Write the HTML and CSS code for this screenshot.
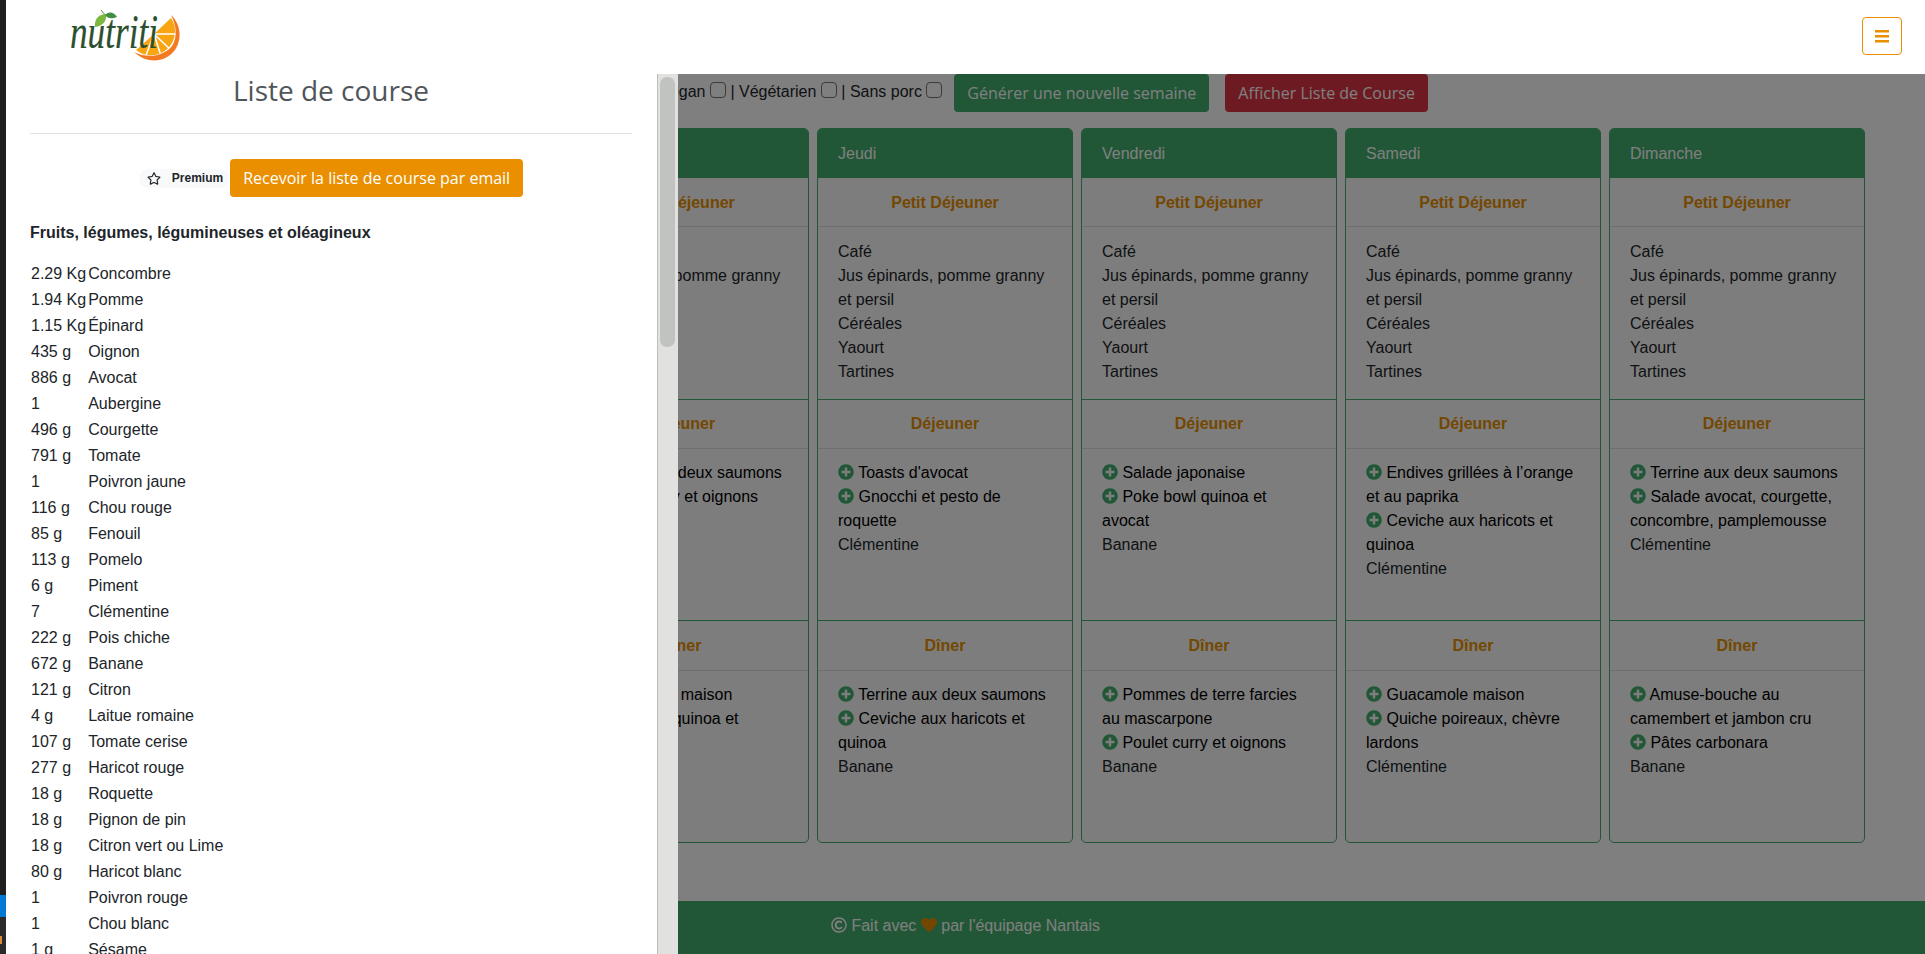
FILE: index.html
```html
<!DOCTYPE html>
<html lang="fr">
<head>
    <meta charset="UTF-8">
    <meta name="viewport" content="width=device-width, initial-scale=1.0">
    <title>Nutriti</title>
    <link rel="stylesheet" href="styles.css">
</head>
<body>
    <svg class="sprites" width="0" height="0">
        <symbol id="i-plus" viewBox="0 0 512 512"><path d="M256 8C119 8 8 119 8 256s111 248 248 248 248-111 248-248S393 8 256 8zm144 276c0 6.6-5.4 12-12 12h-92v92c0 6.6-5.4 12-12 12h-56c-6.6 0-12-5.4-12-12v-92h-92c-6.6 0-12-5.4-12-12v-56c0-6.6 5.4-12 12-12h92v-92c0-6.6 5.4-12 12-12h56c6.6 0 12 5.4 12 12v92h92c6.6 0 12 5.4 12 12v56z"/></symbol>
    </svg>

    <!-- Desktop edge behind the browser -->
    <div class="edge">
        <div class="edge-dark"></div>
        <div class="edge-blue"></div>
        <div class="edge-low"><span class="edge-mark"></span></div>
    </div>

    <div class="page">
        <nav class="navbar">
            <svg class="logo" width="130" height="65" viewBox="0 0 130 65">
                <path d="M94 29 L111 13 A24 24 0 0 1 76 45 Z" fill="#f9a411"/>
                <path d="M94 29 H120 M94 29 L113 47 M94 29 L102 54 M94 29 L85 53" stroke="#fff" stroke-width="1.6"/>
                <path d="M111 10 C120 18 123 33 115 45 C106 57 88 60 74 47 C88 54 104 51 112 41 C118 32 116 20 111 10 Z" fill="#f37a21"/>
                <path d="M41 5 L46 11" stroke="#5c8f3c" stroke-width="1"/>
                <path d="M35 22 C34 14 39 9 46 9 C47 16 43 21 35 22 Z" fill="#7cb83f"/>
                <path d="M45 10 C49 6 54 7 57 12 C52 14 48 14 45 10 Z" fill="#3f8f43"/>
                <text class="logo-text" x="10" y="43" textLength="88" lengthAdjust="spacingAndGlyphs">nutriti</text>
            </svg>
            <button class="menu-btn" type="button">
                <svg width="14" height="13" viewBox="0 0 14 13"><path d="M0 0h14v2.4H0zM0 5h14v2.4H0zM0 10h14v2.4H0z" fill="#e98f00"/></svg>
            </button>
        </nav>

        <div class="filters">
            <span class="filter-label">Filtrer : Végan <input type="checkbox"> | Végétarien <input type="checkbox"> | Sans porc <input type="checkbox"></span>
            <button class="btn btn-green" type="button">Générer une nouvelle semaine</button>
            <button class="btn btn-red" type="button">Afficher Liste de Course</button>
        </div>

        <div class="week">
            <div class="card">
                <div class="card-head">Lundi</div>
                <div class="meal">
                    <div class="meal-title">Petit Déjeuner</div>
                    <div class="meal-body">Café<br>Jus épinards, pomme granny et persil<br>Céréales<br>Yaourt<br>Tartines</div>
                </div>
                <div class="meal">
                    <div class="meal-title">Déjeuner</div>
                    <div class="meal-body">
                        <div class="dish"><svg class="plus"><use href="#i-plus"/></svg> Salade japonaise</div>
                        <div class="dish"><svg class="plus"><use href="#i-plus"/></svg> Toasts d'avocat</div>
                        Banane
                    </div>
                </div>
                <div class="meal">
                    <div class="meal-title">Dîner</div>
                    <div class="meal-body">
                        <div class="dish"><svg class="plus"><use href="#i-plus"/></svg> Guacamole maison</div>
                        <div class="dish"><svg class="plus"><use href="#i-plus"/></svg> Pâtes carbonara</div>
                        Clémentine
                    </div>
                </div>
            </div>
            <div class="card">
                <div class="card-head">Mardi</div>
                <div class="meal">
                    <div class="meal-title">Petit Déjeuner</div>
                    <div class="meal-body">Café<br>Jus épinards, pomme granny et persil<br>Céréales<br>Yaourt<br>Tartines</div>
                </div>
                <div class="meal">
                    <div class="meal-title">Déjeuner</div>
                    <div class="meal-body">
                        <div class="dish"><svg class="plus"><use href="#i-plus"/></svg> Poke bowl quinoa et avocat</div>
                        <div class="dish"><svg class="plus"><use href="#i-plus"/></svg> Poulet curry et oignons</div>
                        Clémentine
                    </div>
                </div>
                <div class="meal">
                    <div class="meal-title">Dîner</div>
                    <div class="meal-body">
                        <div class="dish"><svg class="plus"><use href="#i-plus"/></svg> Terrine aux deux saumons</div>
                        <div class="dish"><svg class="plus"><use href="#i-plus"/></svg> Gnocchi et pesto de roquette</div>
                        Banane
                    </div>
                </div>
            </div>
            <div class="card">
                <div class="card-head">Mercredi</div>
                <div class="meal">
                    <div class="meal-title">Petit Déjeuner</div>
                    <div class="meal-body">Café<br>Jus épinards, pomme granny et persil<br>Céréales<br>Yaourt<br>Tartines</div>
                </div>
                <div class="meal">
                    <div class="meal-title">Déjeuner</div>
                    <div class="meal-body">
                        <div class="dish"><svg class="plus"><use href="#i-plus"/></svg> Terrine aux deux saumons</div>
                        <div class="dish"><svg class="plus"><use href="#i-plus"/></svg> Poulet curry et oignons</div>
                        Banane
                    </div>
                </div>
                <div class="meal">
                    <div class="meal-title">Dîner</div>
                    <div class="meal-body">
                        <div class="dish"><svg class="plus"><use href="#i-plus"/></svg> Guacamole maison</div>
                        <div class="dish"><svg class="plus"><use href="#i-plus"/></svg> Poke bowl quinoa et avocat</div>
                        Banane
                    </div>
                </div>
            </div>
            <div class="card">
                <div class="card-head">Jeudi</div>
                <div class="meal">
                    <div class="meal-title">Petit Déjeuner</div>
                    <div class="meal-body">Café<br>Jus épinards, pomme granny et persil<br>Céréales<br>Yaourt<br>Tartines</div>
                </div>
                <div class="meal">
                    <div class="meal-title">Déjeuner</div>
                    <div class="meal-body">
                        <div class="dish"><svg class="plus"><use href="#i-plus"/></svg> Toasts d'avocat</div>
                        <div class="dish"><svg class="plus"><use href="#i-plus"/></svg> Gnocchi et pesto de roquette</div>
                        Clémentine
                    </div>
                </div>
                <div class="meal">
                    <div class="meal-title">Dîner</div>
                    <div class="meal-body">
                        <div class="dish"><svg class="plus"><use href="#i-plus"/></svg> Terrine aux deux saumons</div>
                        <div class="dish"><svg class="plus"><use href="#i-plus"/></svg> Ceviche aux haricots et quinoa</div>
                        Banane
                    </div>
                </div>
            </div>
            <div class="card">
                <div class="card-head">Vendredi</div>
                <div class="meal">
                    <div class="meal-title">Petit Déjeuner</div>
                    <div class="meal-body">Café<br>Jus épinards, pomme granny et persil<br>Céréales<br>Yaourt<br>Tartines</div>
                </div>
                <div class="meal">
                    <div class="meal-title">Déjeuner</div>
                    <div class="meal-body">
                        <div class="dish"><svg class="plus"><use href="#i-plus"/></svg> Salade japonaise</div>
                        <div class="dish"><svg class="plus"><use href="#i-plus"/></svg> Poke bowl quinoa et avocat</div>
                        Banane
                    </div>
                </div>
                <div class="meal">
                    <div class="meal-title">Dîner</div>
                    <div class="meal-body">
                        <div class="dish"><svg class="plus"><use href="#i-plus"/></svg> Pommes de terre farcies au mascarpone</div>
                        <div class="dish"><svg class="plus"><use href="#i-plus"/></svg> Poulet curry et oignons</div>
                        Banane
                    </div>
                </div>
            </div>
            <div class="card">
                <div class="card-head">Samedi</div>
                <div class="meal">
                    <div class="meal-title">Petit Déjeuner</div>
                    <div class="meal-body">Café<br>Jus épinards, pomme granny et persil<br>Céréales<br>Yaourt<br>Tartines</div>
                </div>
                <div class="meal">
                    <div class="meal-title">Déjeuner</div>
                    <div class="meal-body">
                        <div class="dish"><svg class="plus"><use href="#i-plus"/></svg> Endives grillées à l’orange et au paprika</div>
                        <div class="dish"><svg class="plus"><use href="#i-plus"/></svg> Ceviche aux haricots et quinoa</div>
                        Clémentine
                    </div>
                </div>
                <div class="meal">
                    <div class="meal-title">Dîner</div>
                    <div class="meal-body">
                        <div class="dish"><svg class="plus"><use href="#i-plus"/></svg> Guacamole maison</div>
                        <div class="dish"><svg class="plus"><use href="#i-plus"/></svg> Quiche poireaux, chèvre lardons</div>
                        Clémentine
                    </div>
                </div>
            </div>
            <div class="card">
                <div class="card-head">Dimanche</div>
                <div class="meal">
                    <div class="meal-title">Petit Déjeuner</div>
                    <div class="meal-body">Café<br>Jus épinards, pomme granny et persil<br>Céréales<br>Yaourt<br>Tartines</div>
                </div>
                <div class="meal">
                    <div class="meal-title">Déjeuner</div>
                    <div class="meal-body">
                        <div class="dish"><svg class="plus"><use href="#i-plus"/></svg> Terrine aux deux saumons</div>
                        <div class="dish"><svg class="plus"><use href="#i-plus"/></svg> Salade avocat, courgette, concombre, pamplemousse</div>
                        Clémentine
                    </div>
                </div>
                <div class="meal">
                    <div class="meal-title">Dîner</div>
                    <div class="meal-body">
                        <div class="dish"><svg class="plus"><use href="#i-plus"/></svg> Amuse-bouche au camembert et jambon cru</div>
                        <div class="dish"><svg class="plus"><use href="#i-plus"/></svg> Pâtes carbonara</div>
                        Banane
                    </div>
                </div>
            </div>
        </div>

        <footer class="footer">
            <svg class="copy" viewBox="0 0 512 512"><path d="M256 8C119.033 8 8 119.033 8 256s111.033 248 248 248 248-111.033 248-248S392.967 8 256 8zm0 448c-110.532 0-200-89.451-200-200 0-110.531 89.451-200 200-200 110.532 0 200 89.451 200 200 0 110.532-89.451 200-200 200zm107.351-101.064c-9.614 9.712-45.53 41.396-104.065 41.396-82.43 0-140.484-61.425-140.484-141.567 0-79.152 60.275-139.401 139.762-139.401 55.531 0 88.738 26.62 97.593 34.779a11.965 11.965 0 0 1 1.936 15.322l-18.155 28.113c-3.841 5.95-11.966 7.282-17.499 2.921-8.595-6.776-31.814-22.538-61.708-22.538-48.303 0-77.916 35.33-77.916 80.082 0 41.589 26.888 83.692 78.277 83.692 32.657 0 56.843-19.039 65.726-27.14 5.769-5.261 14.85-4.35 19.534 1.82l19.518 25.623c3.434 4.512 2.929 10.848-1.044 14.9z"/></svg>
            Fait avec
            <svg class="heart" viewBox="0 0 512 512"><path d="M462.3 62.6C407.5 15.9 326 24.3 275.7 76.2L256 96.5l-19.7-20.3C186.1 24.3 104.5 15.9 49.7 62.6c-62.8 53.6-66.1 149.8-9.9 207.9l193.5 199.8c12.5 12.9 32.8 12.9 45.3 0l193.5-199.8c56.3-58.1 53-154.3-9.8-207.9z"/></svg>
            par l'équipage Nantais
        </footer>

        <!-- Shopping list opened over the dimmed page -->
        <div class="overlay"></div>
        <aside class="panel">
            <div class="panel-inner">
                <h2 class="panel-title">Liste de course</h2>
                <hr class="panel-rule">
                <div class="panel-actions">
                    <span class="badge">
                        <svg class="star" viewBox="0 0 576 512"><path d="M528.1 171.5L382 150.2 316.7 17.8c-11.7-23.6-45.6-23.9-57.4 0L194 150.2 47.9 171.5c-26.2 3.8-36.7 36.1-17.7 54.6l105.7 103-25 145.5c-4.5 26.3 23.2 46 46.4 33.7L288 439.6l130.7 68.7c23.2 12.2 50.9-7.4 46.4-33.7l-25-145.5 105.7-103c19-18.5 8.5-50.8-17.7-54.6zM388.6 312.3l23.7 138.4L288 385.4l-124.3 65.3 23.7-138.4-100.6-98 139-20.2 62.2-126 62.2 126 139 20.2-100.6 98z"/></svg>
                        Premium
                    </span>
                    <button class="btn btn-orange" type="button">Recevoir la liste de course par email</button>
                </div>
                <h3 class="list-title">Fruits, légumes, légumineuses et oléagineux</h3>
                <table class="list">
                    <tr><td>2.29 Kg</td><td>Concombre</td></tr>
                    <tr><td>1.94 Kg</td><td>Pomme</td></tr>
                    <tr><td>1.15 Kg</td><td>Épinard</td></tr>
                    <tr><td>435 g</td><td>Oignon</td></tr>
                    <tr><td>886 g</td><td>Avocat</td></tr>
                    <tr><td>1</td><td>Aubergine</td></tr>
                    <tr><td>496 g</td><td>Courgette</td></tr>
                    <tr><td>791 g</td><td>Tomate</td></tr>
                    <tr><td>1</td><td>Poivron jaune</td></tr>
                    <tr><td>116 g</td><td>Chou rouge</td></tr>
                    <tr><td>85 g</td><td>Fenouil</td></tr>
                    <tr><td>113 g</td><td>Pomelo</td></tr>
                    <tr><td>6 g</td><td>Piment</td></tr>
                    <tr><td>7</td><td>Clémentine</td></tr>
                    <tr><td>222 g</td><td>Pois chiche</td></tr>
                    <tr><td>672 g</td><td>Banane</td></tr>
                    <tr><td>121 g</td><td>Citron</td></tr>
                    <tr><td>4 g</td><td>Laitue romaine</td></tr>
                    <tr><td>107 g</td><td>Tomate cerise</td></tr>
                    <tr><td>277 g</td><td>Haricot rouge</td></tr>
                    <tr><td>18 g</td><td>Roquette</td></tr>
                    <tr><td>18 g</td><td>Pignon de pin</td></tr>
                    <tr><td>18 g</td><td>Citron vert ou Lime</td></tr>
                    <tr><td>80 g</td><td>Haricot blanc</td></tr>
                    <tr><td>1</td><td>Poivron rouge</td></tr>
                    <tr><td>1</td><td>Chou blanc</td></tr>
                    <tr><td>1 g</td><td>Sésame</td></tr>
                </table>
            </div>
            <div class="rail"><div class="rail-thumb"></div></div>
        </aside>
    </div>
</body>
</html>
```

FILE: styles.css
```css
/* General */
html, body {
    height: 100%;
}
body {
    margin: 0;
    display: flex;
    overflow: hidden;
    font-family: "Liberation Sans", Arial, sans-serif;
    font-size: 16px;
    line-height: 24px;
    color: #212529;
    background: #fff;
}
.sprites {
    position: absolute;
}

/* Desktop edge */
.edge {
    width: 6px;
    flex: none;
    display: flex;
    flex-direction: column;
}
.edge-dark {
    height: 895px;
    background: #1f1f1f;
}
.edge-blue {
    height: 22px;
    background: #0078d4;
}
.edge-low {
    flex: 1;
    background: #2b2b2b;
    padding-top: 19px;
}
.edge-mark {
    display: block;
    width: 2px;
    height: 8px;
    background: #d98a3a;
}

/* Page */
.page {
    flex: 1;
    min-width: 0;
    position: relative;
    display: flex;
    flex-direction: column;
}
.navbar {
    height: 74px;
    flex: none;
    display: flex;
    justify-content: space-between;
    padding: 0 23px 0 54px;
    box-sizing: border-box;
    position: relative;
    z-index: 3;
    background: #fff;
}
.logo {
    margin-top: 5px;
}
.logo-text {
    font-family: "Liberation Serif", serif;
    font-style: italic;
    font-size: 48px;
    fill: #2c4f30;
    stroke: #2c4f30;
    stroke-width: 0.2px;
}
.menu-btn {
    width: 40px;
    height: 38px;
    margin-top: 17px;
    padding: 0;
    background: #fff;
    border: 1px solid #e98f00;
    border-radius: 4px;
    display: flex;
    align-items: center;
    justify-content: center;
}

/* Filters */
.filters {
    height: 54px;
    flex: none;
    display: flex;
    align-items: flex-start;
    gap: 16px;
    padding-left: 599px;
}
.filter-label {
    padding-top: 6px;
    margin-right: -4px;
}
.filter-label input {
    appearance: none;
    width: 16px;
    height: 16px;
    margin: 0;
    vertical-align: -1px;
    background: #fff;
    border: 1px solid #767676;
    border-radius: 4px;
}
.btn {
    height: 38px;
    padding: 0 12px;
    border: 1px solid transparent;
    border-radius: 4px;
    font-family: "Open Sans", sans-serif;
    font-size: 16px;
    color: #fff;
}
.btn-green {
    background: #42ae6c;
}
.btn-red {
    background: #dc3545;
}
.btn-orange {
    background: #e98f00;
}

/* Week */
.week {
    display: grid;
    grid-template-columns: repeat(7, 256px);
    gap: 8px;
    padding-left: 19px;
}
.card {
    height: 715px;
    box-sizing: border-box;
    display: flex;
    flex-direction: column;
    background: #fbfbfb;
    border: 1px solid #42ae6c;
    border-radius: 5px;
    overflow: hidden;
}
.card-head {
    height: 49px;
    flex: none;
    box-sizing: border-box;
    padding: 13px 20px 0;
    background: #42ae6c;
    color: #fff;
}
.meal {
    height: 221px;
    flex: none;
    box-sizing: border-box;
    border-bottom: 1px solid #42ae6c;
}
.meal:last-child {
    flex: 1;
    border-bottom: 0;
}
.meal-title {
    padding: 12px 20px;
    text-align: center;
    font-weight: bold;
    color: #e98f00;
    border-bottom: 1px solid #dedede;
}
.meal-body {
    padding: 12px 20px;
}
/* the first and last block sit one pixel lower than the middle one */
.card-head + .meal {
    height: 222px;
}
.card-head + .meal .meal-title {
    padding: 13px 20px 11px;
}
.card-head + .meal .meal-body {
    padding-top: 13px;
}
.meal:last-child .meal-title {
    padding-top: 13px;
}
.dish {
    color: #000;
}
.plus {
    width: 16px;
    height: 16px;
    vertical-align: -2px;
    fill: #42ae6c;
}

/* Footer */
.footer {
    height: 53px;
    flex: none;
    box-sizing: border-box;
    margin-top: auto;
    padding-top: 13px;
    text-align: center;
    background: #42ae6c;
    color: #fff;
}
.copy {
    width: 16px;
    height: 16px;
    vertical-align: -2px;
    fill: #fff;
}
.heart {
    width: 16px;
    height: 16px;
    vertical-align: -2px;
    fill: #e98f00;
}

/* Overlay and shopping list */
.overlay {
    position: absolute;
    top: 74px;
    right: 0;
    bottom: 0;
    left: 0;
    z-index: 1;
    background: rgba(0, 0, 0, 0.5);
}
.panel {
    position: absolute;
    top: 74px;
    bottom: 0;
    left: 0;
    width: 672px;
    z-index: 2;
    display: flex;
    overflow: hidden;
    background: #fff;
}
.panel-inner {
    width: 651px;
    flex: none;
    padding: 0 25px 0 24px;
    box-sizing: border-box;
}
.rail {
    width: 21px;
    flex: none;
    box-sizing: border-box;
    border-left: 1px solid #bdbdbd;
    background: #e1e1df;
    padding: 3px 3px 0 2px;
}
.rail-thumb {
    height: 270px;
    border-radius: 7px;
    background: #c1c3c1;
}
.panel-title {
    margin: 0;
    text-align: center;
    font-family: "Open Sans", sans-serif;
    font-size: 28px;
    font-weight: normal;
    line-height: 32px;
    color: #50555a;
}
.panel-rule {
    margin: 27px 0 25px;
    border: 0;
    border-top: 1px solid #e2e2e2;
}
.panel-actions {
    display: flex;
    justify-content: center;
    align-items: center;
}
.badge {
    display: flex;
    align-items: center;
    gap: 11px;
    height: 19px;
    padding: 0 6px 0 8px;
    border-radius: 10px;
    background: #f8f9fa;
    font-size: 12px;
    font-weight: bold;
    line-height: 12px;
    margin-right: 1px;
}
.star {
    width: 14px;
    height: 13px;
    fill: #212529;
}
.list-title {
    margin: 24px 0 15px;
    font-size: 16px;
    line-height: 24px;
}
.list {
    border-collapse: separate;
    border-spacing: 0 2px;
    margin-left: 1px;
}
.list td {
    padding: 0;
}
.list td:first-child {
    padding-right: 2px;
}
```
